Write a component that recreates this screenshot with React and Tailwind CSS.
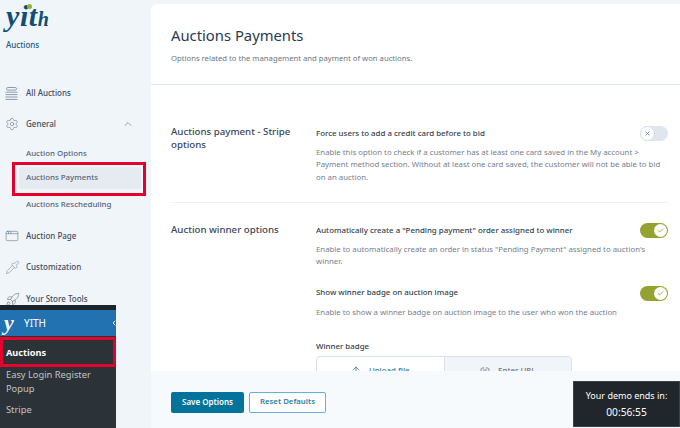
import React from "react";
import { AppWindow, ArrowUp, Check, ChevronLeft, ChevronUp, Link2, Pipette, Rocket, Settings, X } from "lucide-react";

const font = "font-['Noto_Sans','Open_Sans',sans-serif]";

function StackIcon() {
  return (
    <svg width="13" height="13" viewBox="0 0 13 13" fill="none" stroke="#8b9bad" strokeWidth="1">
      <rect x="1.5" y="0.5" width="10" height="2.6" rx="1.3" />
      <path d="M0.5 5.2h12M0.5 7.6h12M0.5 10h12M0.5 12.4h12" />
    </svg>
  );
}

function MenuItem({ icon, label, className = "", children }) {
  return (
    <div className={`flex items-center pl-[5px] pr-[17px] ${className}`}>
      <span className="flex w-[21px] shrink-0 items-center">{icon}</span>
      <span className="text-[8px] font-medium text-[#3f4d5e]">{label}</span>
      {children}
    </div>
  );
}

function SubItem({ label, className = "" }) {
  return <div className={`pl-[26px] text-[7.9px] font-medium text-[#56657a] ${className}`}>{label}</div>;
}

function Toggle({ on }) {
  if (on) {
    return (
      <div className="flex h-[15px] w-[28px] shrink-0 items-center justify-end rounded-full bg-[#94a232] pr-[1px]">
        <div className="flex h-[13px] w-[13px] items-center justify-center rounded-full bg-white">
          <Check size={7} strokeWidth={3} color="#94a232" />
        </div>
      </div>
    );
  }
  return (
    <div className="flex h-[15px] w-[28px] shrink-0 items-center rounded-full bg-[#dfe6ef]">
      <div className="flex h-[15px] w-[15px] items-center justify-center rounded-full border border-[#d5dde8] bg-white">
        <X size={7} strokeWidth={3} color="#7d8b9c" />
      </div>
    </div>
  );
}

function Option({ title, on, children, className = "" }) {
  return (
    <div className={className}>
      <div className="flex h-[15px] items-center justify-between">
        <span className="text-[7.9px] font-medium text-[#333f4e]">{title}</span>
        <Toggle on={on} />
      </div>
      <p className="mt-[5px] w-[350px] text-[7.8px] leading-[12.3px] text-[#75808e]">{children}</p>
    </div>
  );
}

export default function App() {
  return (
    <div className={`relative flex h-[428px] w-[680px] overflow-hidden bg-[#f0f5fa] ${font}`}>
      <aside className="w-[151px] shrink-0">
        <div className="pl-[6px]">
          <div className="relative h-[35px] font-['Liberation_Serif',serif] text-[30px] font-bold italic leading-[32px] tracking-[0.6px] text-[#0f4f75]">
            yit<span className="text-[20px]">h</span>
            <span className="absolute left-[21px] top-[4px] h-[5px] w-[5px] rounded-full bg-[#93b52b]" />
          </div>
          <div className="mt-[4px] text-[8px] font-medium leading-[12px] text-[#1d5a80]">Auctions</div>
        </div>
        <MenuItem className="mt-[35px] h-[14px]" icon={<StackIcon />} label="All Auctions" />
        <MenuItem className="mt-[17px] h-[14px]" icon={<Settings size={14} strokeWidth={1.1} color="#6f8092" />} label="General">
          <ChevronUp size={12} strokeWidth={1.5} color="#7b8a9b" className="ml-auto" />
        </MenuItem>
        <SubItem className="mt-[16px] h-[13px] leading-[13px]" label="Auction Options" />
        <div className="relative mt-[7px] ml-[19px] mr-[10px] flex h-[22px] items-center rounded-[2px] bg-[#e6ebf2] pl-[7px] text-[7.9px] font-medium text-[#56657a]">
          Auctions Payments
          <div className="absolute left-[-7px] right-[-5px] top-[-5px] bottom-[-7px] border-[3px] border-[#e4002b]" />
        </div>
        <SubItem className="mt-[9px] h-[13px] leading-[13px]" label="Auctions Rescheduling" />
        <MenuItem className="mt-[18px] h-[14px]" icon={<AppWindow size={14} strokeWidth={1.1} color="#6f8092" />} label="Auction Page" />
        <MenuItem className="mt-[17px] h-[14px]" icon={<Pipette size={15} strokeWidth={1.1} color="#8b9bad" />} label="Customization" />
        <MenuItem className="mt-[18px] h-[14px]" icon={<Rocket size={15} strokeWidth={1.1} color="#6f8092" />} label="Your Store Tools" />
      </aside>

      <main className="mt-[4px] flex min-w-0 flex-1 flex-col overflow-hidden rounded-tl-[6px] bg-white">
        <header className="h-[81px] shrink-0 border-b border-[#e0e6ef] pl-[20px] pt-[19px]">
          <h1 className="text-[14.8px] font-normal leading-[24px] text-[#2b3a4e]">Auctions Payments</h1>
          <p className="mt-[5px] text-[7.7px] leading-[12px] text-[#6b7683]">Options related to the management and payment of won auctions.</p>
        </header>

        <div className="min-h-0 flex-1 overflow-hidden pl-[20px] pr-[12px]">
          <section className="flex h-[118px] border-b border-[#eceff3] pt-[41px]">
            <h2 className="w-[145px] shrink-0 text-[9.7px] font-medium leading-[12.5px] text-[#3a4656]">
              Auctions payment - Stripe options
            </h2>
            <Option className="flex-1" title="Force users to add a credit card before to bid" on={false}>
              Enable this option to check if a customer has at least one card saved in the My account &gt; Payment method section. Without at least one card saved, the customer will not be able to bid on an auction.
            </Option>
          </section>
          <section className="flex pt-[20px]">
            <h2 className="mt-[1px] w-[145px] shrink-0 text-[9.7px] font-medium leading-[12.5px] text-[#3a4656]">
              Auction winner options
            </h2>
            <div className="flex-1">
              <Option title={'Automatically create a "Pending payment" order assigned to winner'} on>
                Enable to automatically create an order in status "Pending Payment" assigned to auction's winner.
              </Option>
              <Option className="mt-[18px]" title="Show winner badge on auction image" on>
                Enable to show a winner badge on auction image to the user who won the auction
              </Option>
              <div className="mt-[22px] text-[7.9px] font-medium leading-[12px] text-[#333f4e]">Winner badge</div>
              <div className="mt-[4px] flex h-[30px] w-[256px] overflow-hidden rounded-t-[4px] border border-[#d8e0ea] text-[7.9px] font-medium">
                <div className="flex flex-1 items-start justify-center gap-[8px] pt-[8px] text-[#3b7fa6]">
                  <ArrowUp size={10} strokeWidth={2} />
                  Upload file
                </div>
                <div className="flex flex-1 items-start justify-center gap-[8px] border-l border-[#d8e0ea] bg-[#f1f4f8] pt-[8px] text-[#6b7683]">
                  <Link2 size={10} strokeWidth={2} />
                  Enter URL
                </div>
              </div>
            </div>
          </section>
        </div>

        <footer className="flex h-[57px] shrink-0 items-center gap-[5px] bg-[#f7fafc] pl-[20px] pt-[5px]">
          <button className="h-[21px] w-[73px] rounded-[2px] bg-[#04739c] text-[8px] font-semibold text-white">Save Options</button>
          <button className="h-[21px] w-[77px] rounded-[2px] border border-[#5fb4d6] bg-white text-[7.8px] font-semibold text-[#2d7fa3]">Reset Defaults</button>
        </footer>
      </main>

      {/* WP admin menu overlaps the plugin sidebar */}
      <div className="absolute bottom-0 left-0 h-[123px] w-[116px] bg-[#2c3338]">
        <div className="h-[5px] bg-[#1d2327]" />
        <div className="relative flex h-[26px] items-center bg-[#2271b1] pl-[4px] text-[10px] text-white">
          <span className="w-[20px] font-['Liberation_Serif',serif] text-[22px] font-bold italic leading-none">y</span>
          YITH
          <ChevronLeft size={8} strokeWidth={3} className="absolute right-[-2px] top-[9px]" />
        </div>
        <div className="relative flex h-[31px] items-center pl-[6px] pt-[3px] text-[9.2px] font-bold text-white">
          Auctions
          <div className="absolute inset-x-0 top-[1px] bottom-0 border-[3px] border-[#e4002b]" />
        </div>
        <div className="pl-[6px] pt-[1px] text-[9.3px] leading-[14px] text-[#c3c4c7]">
          Easy Login Register Popup
          <div className="mt-[7px]">Stripe</div>
        </div>
      </div>

      {/* demo timer floats over the footer */}
      <div className="absolute right-0 top-[381px] flex h-[46px] w-[107px] flex-col items-center justify-center border border-[#3a4248] bg-[#20262b] text-[9px] leading-[16px] text-white">
        <span>Your demo ends in:</span>
        <span className="text-[10.2px]">00:56:55</span>
      </div>
    </div>
  );
}
